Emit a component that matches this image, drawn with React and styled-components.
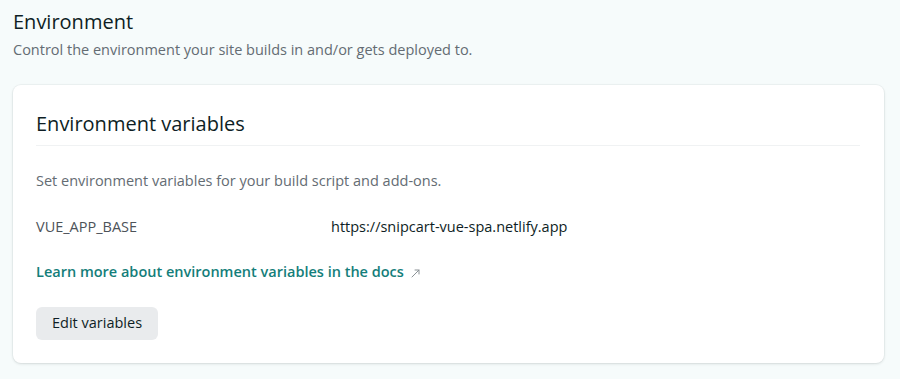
import React from 'react';
import styled, { createGlobalStyle } from 'styled-components';

const GlobalStyle = createGlobalStyle`
    html, body {
        margin: 0;
        padding: 0;
        background: #f6fbfb;
    }
    body {
        font-family: "Open Sans", "Noto Sans", sans-serif;
        color: #0e1e25;
    }
`;

const Page = styled.main`
    width: 900px;
    height: 379px;
    box-sizing: border-box;
    padding: 8px 16px 0 13px;
    background: #f6fbfb;
`;

const Header = styled.header`
    margin-bottom: 24px;
`;

const PageTitle = styled.h2`
    margin: 0;
    font-size: 20px;
    font-weight: 400;
    line-height: 28px;
    color: #0e1e25;
`;

const Lead = styled.p`
    margin: 3px 0 0;
    font-size: 14.5px;
    line-height: 22px;
    color: #646c73;
`;

const Card = styled.section`
    width: 871px;
    box-sizing: border-box;
    background: #ffffff;
    border-radius: 8px;
    box-shadow: 0 1px 3px rgba(14, 30, 37, 0.12), 0 0 0 1px rgba(14, 30, 37, 0.03);
    padding: 25px 24px 23px 23px;
`;

const CardTitle = styled.h3`
    margin: 0;
    padding-bottom: 7px;
    font-size: 20px;
    font-weight: 400;
    line-height: 28px;
    color: #0e1e25;
    border-bottom: 1px solid #f0f2f3;
`;

const Description = styled.p`
    margin: 24px 0 0;
    font-size: 14.5px;
    line-height: 22px;
    color: #646c73;
`;

const VarRow = styled.div`
    display: grid;
    grid-template-columns: 295px 1fr;
    margin-top: 24px;
    font-size: 14.5px;
    line-height: 22px;
`;

const VarKey = styled.span`
    color: #4d5359;
`;

const VarValue = styled.span`
    color: #0e1e25;
`;

const DocsLink = styled.a`
    display: inline-flex;
    align-items: center;
    gap: 7px;
    margin-top: 23px;
    font-size: 14.5px;
    line-height: 22px;
    font-weight: 600;
    color: #147e7a;
    text-decoration: none;
`;

const Arrow = styled.svg`
    width: 9px;
    height: 9px;
    margin-top: 2px;
`;

const Actions = styled.div`
    margin-top: 24px;
`;

const Button = styled.button`
    display: block;
    font-family: inherit;
    font-size: 14.5px;
    font-weight: 500;
    line-height: 20px;
    color: #0e1e25;
    background: #e9ebed;
    border: none;
    border-radius: 6px;
    padding: 6px 16px 7px;
    height: 33px;
    cursor: pointer;
`;

const App = () => {
    return (
        <Page>
            <GlobalStyle />
            <Header>
                <PageTitle>Environment</PageTitle>
                <Lead>Control the environment your site builds in and/or gets deployed to.</Lead>
            </Header>
            <Card>
                <CardTitle>Environment variables</CardTitle>
                <Description>Set environment variables for your build script and add-ons.</Description>
                <VarRow>
                    <VarKey>VUE_APP_BASE</VarKey>
                    <VarValue>https://snipcart-vue-spa.netlify.app</VarValue>
                </VarRow>
                <div>
                    <DocsLink href="#">
                        Learn more about environment variables in the docs
                        <Arrow viewBox="0 0 9 9" fill="none" stroke="#8a9195" strokeWidth="1" strokeLinecap="round">
                            <path d="M1 8L8 1M4 1h4v4" />
                        </Arrow>
                    </DocsLink>
                </div>
                <Actions>
                    <Button>Edit variables</Button>
                </Actions>
            </Card>
        </Page>
    );
};

export default App;
